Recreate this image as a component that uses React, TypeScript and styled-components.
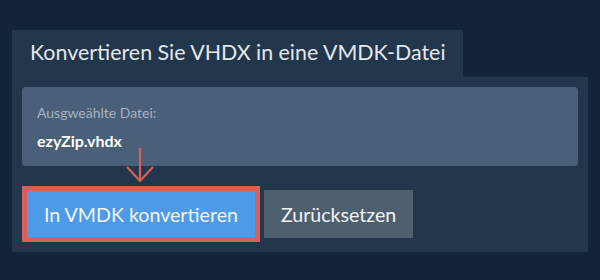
import React from 'react'
import styled, { createGlobalStyle } from 'styled-components'

const GlobalStyle = createGlobalStyle`
  html, body {
    margin: 0;
    background: #12243a;
  }
  body {
    font-family: Lato, "Open Sans", sans-serif;
  }
`

const Page = styled.div`
  padding: 30px 12px 0;
  height: 280px;
  box-sizing: border-box;
`

const Tab = styled.div`
  display: inline-block;
  height: 47px;
  line-height: 45px;
  padding: 0 17px 0 18px;
  background: #22364c;
  color: #e4e7eb;
  font-size: 21.4px;
  font-weight: 400;
`

const Panel = styled.div`
  background: #22364c;
  padding: 10px 10px 14px;
`

const FileBox = styled.div`
  height: 79px;
  box-sizing: border-box;
  padding: 17px 15px 0;
  background: #4a5f78;
  border-radius: 4px;
`

const Label = styled.div`
  color: #a6b2c1;
  font-size: 14px;
  line-height: 18px;
`

const FileName = styled.div`
  margin-top: 9px;
  color: #ffffff;
  font-size: 16px;
  font-weight: 700;
  line-height: 20px;
`

const Actions = styled.div`
  position: relative;
  display: flex;
  gap: 8px;
  margin-top: 24px;
`

const Button = styled.button<{ $primary?: boolean }>`
  height: 48px;
  padding: 0 17px;
  border: 0;
  border-radius: 0;
  font-family: Lato, "Open Sans", sans-serif;
  font-size: 19.6px;
  color: #f2f4f6;
  background: ${p => (p.$primary ? '#4d9be6' : '#4e5f70')};
  ${p => (p.$primary ? 'margin-left: 4px; border: 1px solid #d9605a; box-shadow: 0 0 0 4px #d9605a;' : '')}
`

const Arrow = styled.svg`
  position: absolute;
  left: 104px;
  top: -43px;
`

const App: React.FC = () => {
  return (
    <Page>
      <GlobalStyle />
      <Tab>Konvertieren Sie VHDX in eine VMDK-Datei</Tab>
      <Panel>
        <FileBox>
          <Label>Ausgweählte Datei:</Label>
          <FileName>ezyZip.vhdx</FileName>
        </FileBox>
        <Actions>
          <Arrow width="28" height="36" viewBox="0 0 28 36">
            <path d="M14 1 V34 M1 20 L14 34 L27 20" fill="none" stroke="#d9605a" strokeWidth="2.2" />
          </Arrow>
          <Button $primary>In VMDK konvertieren</Button>
          <Button>Zurücksetzen</Button>
        </Actions>
      </Panel>
    </Page>
  )
}

export default App
